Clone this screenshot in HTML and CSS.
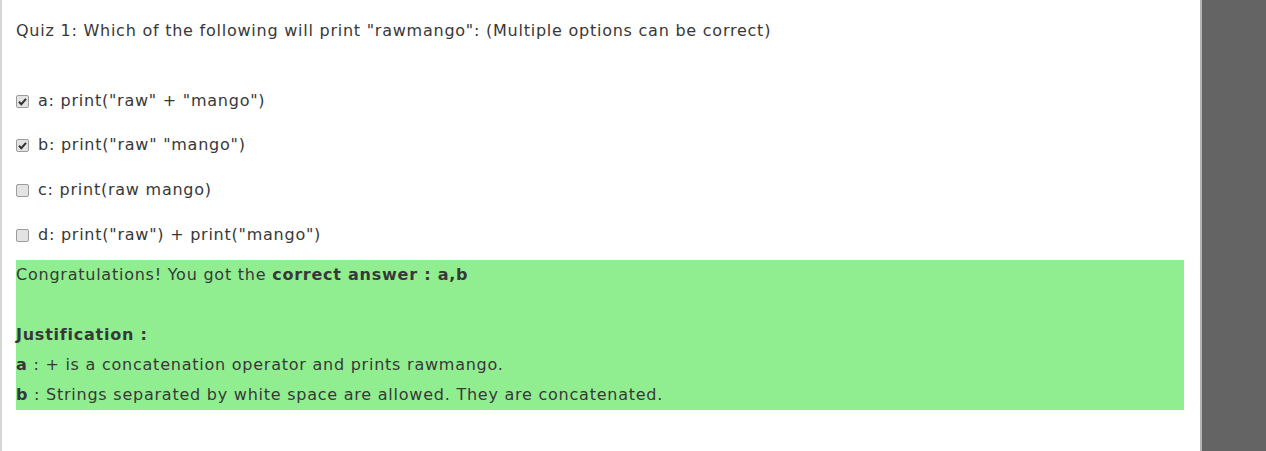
FILE: index.html
```html
<!DOCTYPE html>
<html>
<head>
<meta charset="utf-8">
<link rel="stylesheet" href="styles.css">
</head>
<body>
<div class="page">
  <main class="content">
    <p class="question">Quiz 1: Which of the following will print "rawmango": (Multiple options can be correct)</p>
    <ul class="options">
      <li class="option"><span class="box checked"><svg viewBox="0 0 13 13" width="13" height="13"><path d="M3 6.8 L5.3 9.2 L10 3.8" fill="none" stroke="#333" stroke-width="2"/></svg></span>a: print("raw" + "mango")</li>
      <li class="option"><span class="box checked"><svg viewBox="0 0 13 13" width="13" height="13"><path d="M3 6.8 L5.3 9.2 L10 3.8" fill="none" stroke="#333" stroke-width="2"/></svg></span>b: print("raw" "mango")</li>
      <li class="option"><span class="box"></span>c: print(raw mango)</li>
      <li class="option"><span class="box"></span>d: print("raw") + print("mango")</li>
    </ul>
    <div class="result">
      <div class="line">Congratulations! You got the <b>correct answer : a,b</b></div>
      <div class="line"></div>
      <div class="line"><b>Justification :</b></div>
      <div class="line"><b>a</b> : + is a concatenation operator and prints rawmango.</div>
      <div class="line"><b>b</b> : Strings separated by white space are allowed. They are concatenated.</div>
    </div>
  </main>
  <aside class="side"></aside>
</div>
</body>
</html>
```
FILE: styles.css
```css
html, body {
  margin: 0;
  padding: 0;
  height: 100%;
}
body {
  font-family: "DejaVu Sans", Verdana, sans-serif;
  font-size: 16px;
  letter-spacing: 0.76px;
  color: #383838;
  background: #fff;
}
.page {
  display: flex;
  height: 451px;
}
.content {
  width: 1200px;
  border-left: 2px solid #d6d6d6;
  padding: 0 16px 0 14px;
  box-sizing: border-box;
  flex: none;
}
.side {
  flex: 1;
  background: #646464;
  border-left: 2px solid #b4b4b4;
}
.question {
  margin: 0;
  padding-top: 19px;
  line-height: 24px;
  height: 47px;
}
.options {
  list-style: none;
  margin: 0;
  padding: 0;
}
.option {
  display: flex;
  align-items: center;
  height: 44px;
  line-height: 24px;
}
.option:first-child { margin-top: 13px; }
.option:nth-child(3) { height: 46px; }
.option:last-child { margin-bottom: 3px; }
.box {
  width: 11px;
  height: 11px;
  border: 1px solid #9c9c9c;
  border-radius: 2px;
  background: #e3e3e3;
  margin-right: 9px;
  position: relative;
  flex: none;
}
.box svg {
  position: absolute;
  left: -1px;
  top: -1px;
}
.result {
  background: #90ee90;
  height: 150px;
}
.line {
  height: 30px;
  line-height: 30px;
}
.line b { font-weight: bold; }
```
